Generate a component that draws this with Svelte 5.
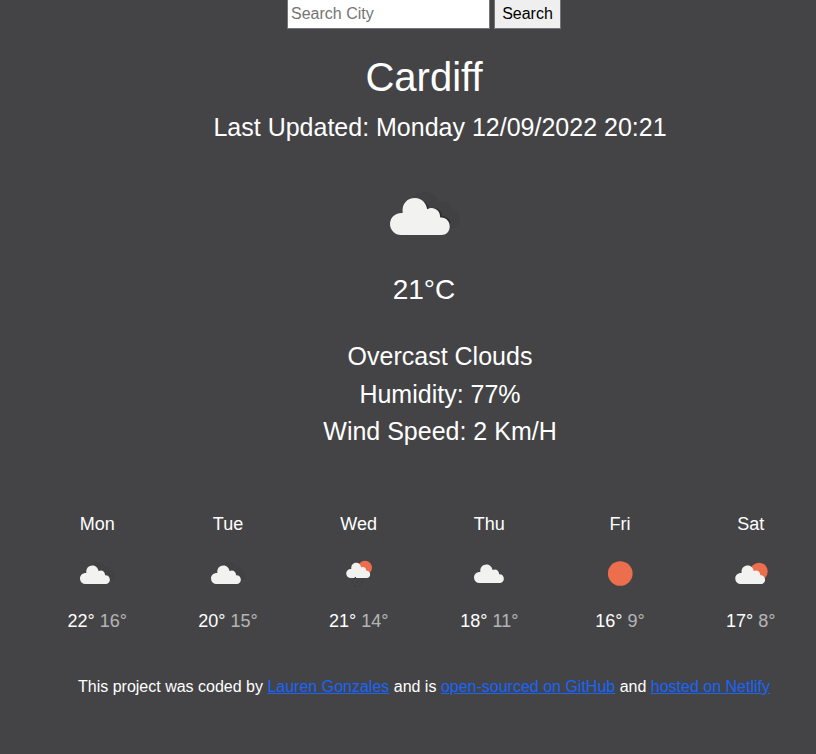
<script>
  let city = $state('');
  const days = [
    { name: 'Mon', icon: 'broken', max: 22, min: 16 },
    { name: 'Tue', icon: 'broken', max: 20, min: 15 },
    { name: 'Wed', icon: 'rain', max: 21, min: 14 },
    { name: 'Thu', icon: 'cloud', max: 18, min: 11 },
    { name: 'Fri', icon: 'sun', max: 16, min: 9 },
    { name: 'Sat', icon: 'partly', max: 17, min: 8 }
  ];
</script>

{#snippet cloud(transform)}
  <path
    {transform}
    fill="#f2f2f0"
    d="M11 37A11 11 0 0 1 0 26C0 19 6 14.5 12.7 15C11.5 6 17 0 25 0C32 0 36 5 37.2 11.2C43 8 50.2 11.5 50.2 19.5C56 19 59.7 23.5 59.7 28.5C59.7 33.5 56 37 51.5 37Z"
  />
{/snippet}

{#snippet icon(kind, size)}
  <svg width={size} height={size} viewBox="0 0 100 100" aria-hidden="true">
    {#if kind === 'sun'}
      <circle cx="50.5" cy="49" r="24.7" fill="#ec6e4c" />
    {:else if kind === 'partly'}
      <circle cx="66" cy="45" r="17.5" fill="#ec6e4c" />
      {@render cloud('translate(18.5 33)')}
    {:else if kind === 'rain'}
      <circle cx="62" cy="37.5" r="14" fill="#ec6e4c" />
      {@render cloud('translate(24.5 27.5) scale(.8 .83)')}
      <path d="M40 60l3-4v4M38 63l-2 5M48 63l-2 5M58 63l-2 5M44 71l-2 5M53 71l-2 5" fill="none" stroke="#3c3c3e" stroke-width="2" />
    {:else if kind === 'cloud'}
      {@render cloud('translate(20 31)')}
    {:else}
      <path
        d="M36 39C38 29 45 26 51 26C59 26 64 31 66 37C72 34 78 38 78 45C83 45 86 49 86 53C86 58 82 62 77 62H55Z"
        fill="#414143"
      />
      {#if size > 50}
        <path
          d="M43 33.5C50 35 53.5 39 54 43.5C61 41 67 44.5 67 50.5C72 51 75 54 76 57"
          fill="none"
          stroke="#2c2c2e"
          stroke-width="1.6"
        />
      {/if}
      {@render cloud(size > 50 ? 'translate(16 32)' : 'translate(16 33)')}
    {/if}
  </svg>
{/snippet}

<div class="app">
  <form onsubmit={(e) => e.preventDefault()}>
    <input type="text" placeholder="Search City" bind:value={city} />
    <button type="submit">Search</button>
  </form>
  <h1>Cardiff</h1>
  <ul>
    <li>Last Updated: Monday 12/09/2022 20:21</li>
  </ul>
  <div class="current">{@render icon('broken', 100)}</div>
  <div class="temperature">21°C</div>
  <ul class="details">
    <li>Overcast Clouds</li>
    <li>Humidity: 77%</li>
    <li>Wind Speed: 2 Km/H</li>
  </ul>
  <div class="forecast">
    {#each days as day}
      <div class="day">
        <div class="name">{day.name}</div>
        {@render icon(day.icon, 50)}
        <div class="range">{day.max}° <span>{day.min}°</span></div>
      </div>
    {/each}
  </div>
  <footer>
    This project was coded by <a href="#author">Lauren Gonzales</a> and is
    <a href="#source">open-sourced on GitHub</a> and <a href="#hosting">hosted on Netlify</a>
  </footer>
</div>

<style>
  :global(body) {
    background: #444446;
  }
  .app {
    box-sizing: border-box;
    height: 754px;
    overflow: hidden;
    padding-left: 32px;
    background: #444446;
    color: #fff;
    font: 16px/1.5 "Liberation Sans", Arial, sans-serif;
    text-align: center;
  }
  form {
    display: flex;
    justify-content: center;
    gap: 4px;
    height: 30px;
    margin-top: -1px;
  }
  input,
  button {
    box-sizing: border-box;
    height: 30px;
    font: inherit;
    border: 1px solid #767676;
    border-radius: 0;
  }
  input {
    width: 203px;
    padding: 1px 3px;
    background: #fff;
  }
  input::placeholder {
    color: #757575;
  }
  button {
    width: 67px;
    padding: 0;
    background: #efefef;
    color: #000;
  }
  h1 {
    margin: 24px 0 8px;
    font-size: 40px;
    line-height: 48px;
    font-weight: 400;
  }
  ul {
    margin: 0;
    padding-left: 32px;
    list-style: none;
    font-size: 25px;
    line-height: 37.5px;
  }
  svg {
    display: block;
    margin: 0 auto;
  }
  .current {
    margin-top: 19px;
  }
  .temperature {
    margin-top: 3px;
    font-size: 28px;
    line-height: 42px;
  }
  .details {
    margin-top: 27.5px;
  }
  .forecast {
    display: grid;
    grid-template-columns: repeat(6, 1fr);
    margin-top: 60.5px;
    font-size: 18px;
    line-height: 27px;
  }
  .name {
    margin-bottom: 11px;
  }
  .range {
    margin-top: 9px;
  }
  .range span {
    opacity: 0.6;
  }
  footer {
    margin-top: 40px;
  }
  a {
    color: #1765fd;
    text-decoration: underline;
  }
</style>
